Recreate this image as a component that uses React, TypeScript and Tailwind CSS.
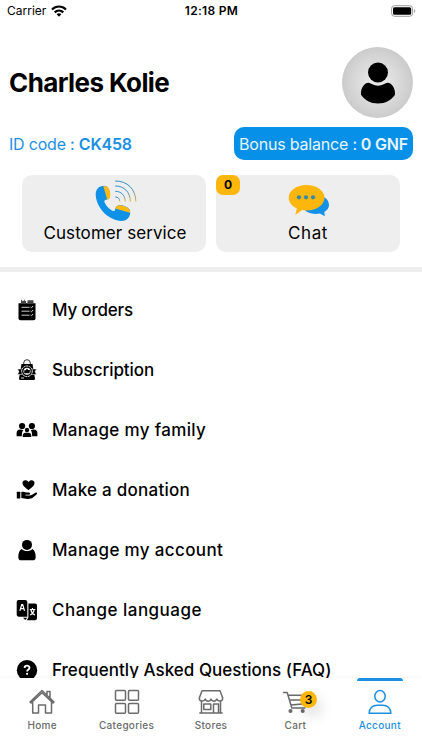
import React from "react";

const ink = "#000";

function OrdersIcon() {
  return (
    <svg width="20" height="22" viewBox="0 0 20 22">
      <path d="M1.500 4.200h17v15a2 2 0 0 1-2 2h-13a2 2 0 0 1-2-2z" fill={ink} />
      <path d="M4 1l1.3 1M8 .8 6.6 2" stroke={ink} strokeWidth=".8" />
      <path d="M4 2h5v2.400H4zM10.500 1.200h6v3h-6z" fill="#444" />
      <path d="M4.5 8.300h8M4.500 12.200h8M4.500 16.200h8M13.500 8l1 .8L16 7M13.500 12l1 .8L16 11M13.500 16l1 .8L16 15" stroke="#ccc" strokeWidth="1" fill="none" />
    </svg>
  );
}

function SubscriptionIcon() {
  return (
    <svg width="20" height="22" viewBox="0 0 20 22">
      <path d="M6.7 6.5V4a3.3 3.3 0 0 1 6.6 0v2.500" fill="none" stroke="#333" strokeWidth="1" />
      <path d="M4.500 5h11L18 19.500a1.500 1.500 0 0 1-1.500 1.500h-13A1.500 1.500 0 0 1 2 19.500z" fill={ink} />
      <path d="M.5 10h5v5.500h-5l1.500-2.700zM19.500 10h-5v5.500h5L18 12.800z" fill={ink} stroke="#fff" strokeWidth=".5" />
      <circle cx="10" cy="12.300" r="5.300" fill={ink} stroke="#fff" strokeWidth="1" strokeDasharray="2 .6" />
      <circle cx="10" cy="12.300" r="3.500" fill="#fff" />
      <path d="M7.200 14.200v-3h1.400L10 9.600l1.100 1.500h1.900l-.5 3.100z" fill={ink} />
      <path d="M4 19h3" stroke="#bbb" strokeWidth="1.200" />
    </svg>
  );
}

function FamilyIcon() {
  return (
    <svg width="22" height="16" viewBox="0 0 22 16">
      <g fill={ink}>
        <circle cx="6.100" cy="4" r="3.100" />
        <circle cx="15.900" cy="4" r="3.100" />
        <path d="M.6 14.300V11c0-2.300 1.500-3.500 3.500-3.500 1.200 0 2.500.2 3.200.8C6 9.500 6 12 5.800 14.300zM21.400 14.300V11c0-2.300-1.500-3.500-3.500-3.500-1.200 0-2.500.2-3.200.8 1.300 1.200 1.300 3.700 1.500 6z" />
        <circle cx="11" cy="8" r="2.200" />
        <path d="M6.700 15v-1.300c0-2 1.200-3 2.700-3h3.200c1.500 0 2.700 1 2.700 3V15z" />
      </g>
    </svg>
  );
}

function DonationIcon() {
  return (
    <svg width="22" height="21" viewBox="0 0 22 21">
      <g fill={ink}>
        <path d="M12.500 11.300C8.300 7.900 6.500 6.200 6.500 4 6.500 1 10.500.2 12.500 2.900 14.500.2 18.500 1 18.500 4c0 2.200-1.800 3.900-6 7.300z" />
        <rect x=".8" y="12.800" width="3.500" height="6.800" rx=".5" />
        <path d="M5.300 13c3-1 4.500.5 6.700.5 2.800 0 2.900 2.300.2 2.300H9.500v.7h3.700c2.200 0 4.500-1.900 6.300-2.700 1.700-.7 2.300.7 1 1.700-3.300 2.700-4.500 4.700-9 4.400l-6.200-.9z" />
      </g>
    </svg>
  );
}

function AccountIcon() {
  return (
    <svg width="20" height="22" viewBox="0 0 20 22">
      <circle cx="10" cy="5.900" r="5" fill={ink} />
      <path d="M4.600 10c2.700 2.800 8.100 2.800 10.800 0 2.400 1.500 3.300 4.200 3.300 8.200 0 1.900-1 3.100-2.800 3.100H4.100c-1.800 0-2.800-1.200-2.800-3.100 0-4 .9-6.700 3.300-8.200z" fill={ink} />
    </svg>
  );
}

function LanguageIcon() {
  return (
    <svg width="22" height="22" viewBox="0 0 22 22">
      <path d="M2.500 1h6.800a2 2 0 0 1 2 1.700V17.700H2.500A2 2 0 0 1 .7 15.800V3a2 2 0 0 1 1.800-2zM12.400 4.500H19a2 2 0 0 1 2 2v12.800a2 2 0 0 1-2 2h-8.300l1.700-2.800zM7 18.700h4.300L9.200 21z" fill={ink} />
      <path d="m3.900 11.800 1.800-6.300h1l1.800 6.300M4.800 9.700H8M13.800 10.500h5.500M16.500 9v1.500M14.200 16c2.200-1.200 3.700-3 3.800-5.300M14.900 11c.5 2.300 1.800 4 4.100 5" fill="none" stroke="#fff" strokeWidth="1.200" />
    </svg>
  );
}

function FaqIcon() {
  return (
    <svg width="22" height="22" viewBox="0 0 22 22">
      <circle cx="11" cy="11.200" r="10.200" fill={ink} />
      <path d="M8.600 8.900c0-3 4.900-2.900 4.900-.2 0 1.800-2.400 1.700-2.400 3.800" fill="none" stroke="#fff" strokeWidth="1.800" />
      <circle cx="11.100" cy="14.800" r="1.100" fill="#fff" />
    </svg>
  );
}

function PhoneIcon() {
  return (
    <svg width="42" height="42" viewBox="0 0 42 42">
      <defs>
        <linearGradient id="wave" x1="0" y1="0" x2="0" y2="1">
          <stop offset=".3" stopColor="#2b91c9" />
          <stop offset="1" stopColor="#e8b12c" />
        </linearGradient>
      </defs>
      <path d="M10.200 5.900C4 5.500 0 9.600.8 16 2 27.500 12 39.600 25.700 40.900c5.500.2 9.300-3 9.500-8.200.2-3.300-1.200-4.900-4.300-6-4.200-1.700-8.200-2-10 .5-.9 1.400-.5 3.100-1.700 3.800-3 .8-10.500-7.500-9.800-10.300.3-1.100 2.500-.9 4-1.800 2.200-1.500 2-4.500.9-8.200-.8-2.700-1.800-4.600-4.100-4.800z" fill="#0f91e8" />
      <path d="M8.300 5.900c3.700-.2 5.400 1.400 6.200 4.200 1.200 4.400 1.400 8.600-2.200 10z" fill="#fdb913" />
      <path d="M20.200 28.500c1-4.300 5.500-3.700 10.500-1.800 3.300 1.200 4.700 3.100 4.300 6z" fill="#fdb913" />
      <g fill="none" stroke="url(#wave)" strokeWidth="1">
        <path d="M20.200 1C32.500 1 40.500 9 40.900 21.500" />
        <path d="M20.200 6c9 0 14.900 6 15.200 15.500" />
        <path d="M20.200 11.300c6 0 9.900 4 10 10.200" />
        <path d="M20.200 17c3 0 4.500 1.600 4.600 4.500" />
      </g>
    </svg>
  );
}

function ChatIcon() {
  return (
    <svg width="42" height="34" viewBox="0 0 42 34">
      <path d="M27 11c8-.5 14 4 14 10 0 3-1.700 5.300-4.700 7l.6 4.300-5-2.700c-7 1.200-14-.5-16-5z" fill="#1191e8" />
      <path d="M18.500 1C28.500 1 36.500 6.500 36.500 13.700S28.500 26.500 18.500 26.500c-1.700 0-3-.1-4.400-.4L7.300 31l1.500-6.700C4 22.200.7 18.400.7 13.700.7 6.500 8.600 1 18.500 1z" fill="#fdb60b" />
      <g fill="#358aa6"><circle cx="11" cy="13.300" r="2.100" /><circle cx="18" cy="13.300" r="2.100" /><circle cx="25" cy="13.300" r="2.100" /></g>
    </svg>
  );
}

const line = { fill: "none", stroke: "currentColor", strokeWidth: 1.5, strokeLinejoin: "round" as const, strokeLinecap: "round" as const };

const navIcons = {
  home: (
    <svg width="28" height="28" viewBox="0 0 28 28" {...line}>
      <path d="M2 14 14 2.500 26 14l-1 1L14 4.700 3 15zM4.700 14.500V25H10.500v-8h7v8h6V14.500M19 6.500V3.500h3v6" />
    </svg>
  ),
  categories: (
    <svg width="28" height="28" viewBox="0 0 28 28" {...line}>
      <rect x="2.500" y="2.500" width="10" height="9.800" rx="1" /><rect x="15.500" y="2.500" width="10" height="9.800" rx="1" />
      <rect x="2.500" y="15.500" width="10" height="9.800" rx="1" /><rect x="15.500" y="15.500" width="10" height="9.800" rx="1" />
    </svg>
  ),
  stores: (
    <svg width="28" height="28" viewBox="0 0 28 28" {...line}>
      <path d="M5 2.700h18l2.700 7.200c0 4-4.400 4-5.900 1.200-1.300 2.800-4.900 2.800-5.800 0-.9 2.800-4.500 2.800-5.800 0C6.700 13.900 2.300 13.900 2.300 9.900zM4.500 13v12M23.500 13v12M16.500 25v-9h5v9M6.800 16h7v5.500h-7zM2.800 25h22.400" />
    </svg>
  ),
  cart: (
    <svg width="28" height="28" viewBox="0 0 28 28" {...line}>
      <path d="M2.500 4.500h3.700L10.800 20H24M7.200 7.200H26l-2 8.600-14 1.200M8.700 12H25" />
      <circle cx="9.500" cy="23" r="1.300" fill="currentColor" /><circle cx="21.700" cy="23" r="1.300" fill="currentColor" />
    </svg>
  ),
  account: (
    <svg width="28" height="28" viewBox="0 0 28 28" {...line}>
      <ellipse cx="14" cy="8.200" rx="5.200" ry="5.700" />
      <path d="M3.200 25.200c0-5.200 3.700-7.900 8-7.900h5.600c4.300 0 8 2.700 8 7.900z" />
    </svg>
  ),
};

const menu = [
  { label: "My orders", icon: <OrdersIcon />, tracking: "tracking-[-0.2px]" },
  { label: "Subscription", icon: <SubscriptionIcon />, tracking: "tracking-[-0.05px]" },
  { label: "Manage my family", icon: <FamilyIcon />, tracking: "tracking-[0.35px]" },
  { label: "Make a donation", icon: <DonationIcon />, tracking: "tracking-[0.25px]" },
  { label: "Manage my account", icon: <AccountIcon />, tracking: "tracking-[0.36px]" },
  { label: "Change language", icon: <LanguageIcon />, tracking: "tracking-[0.48px]" },
  { label: "Frequently Asked Questions (FAQ)", icon: <FaqIcon />, tracking: "tracking-[0.02px]" },
];

const tabs = [
  { label: "Home", icon: navIcons.home },
  { label: "Categories", icon: navIcons.categories },
  { label: "Stores", icon: navIcons.stores },
  { label: "Cart", icon: navIcons.cart, badge: 3 },
  { label: "Account", icon: navIcons.account, active: true },
];

export default function App() {
  return (
    <div className="flex h-[750px] w-[422px] flex-col overflow-hidden bg-white font-['Inter',sans-serif] text-black">
      <div className="grid h-[22px] shrink-0 grid-cols-3 items-center pl-[7px] pr-[6px] text-[12px]">
        <div className="flex items-center gap-[5px]">
          <span>Carrier</span>
          <svg width="16" height="12" viewBox="0 0 16 12" fill="none" stroke="#000" strokeWidth="2.200">
            <path d="M1 4.500c4-4 10-4 14 0M3.700 7.400c2.500-2.400 6.100-2.400 8.600 0" />
            <path d="M5.600 9.300c1.500-1.300 3.300-1.300 4.800 0L8 11.700z" fill="#000" stroke="none" />
          </svg>
        </div>
        <span className="text-center font-semibold tracking-[0.3px] whitespace-nowrap">12:18 PM</span>
        <div className="flex justify-end">
          <svg width="25" height="12" viewBox="0 0 25 12">
            <rect x=".6" y=".7" width="21" height="10.600" rx="3" fill="#fff" stroke="#999" />
            <rect x="2" y="2.200" width="18.200" height="7.600" rx="1.500" />
            <path d="M23.300 4c1.300.7 1.300 3.300 0 4z" fill="#888" />
          </svg>
        </div>
      </div>

      <header className="flex h-[96px] shrink-0 items-end justify-between px-[9px]">
        <h1 className="flex h-[71px] items-center text-[26px] font-bold tracking-[-0.6px]">Charles Kolie</h1>
        <div className="flex size-[71px] items-center justify-center rounded-full bg-[radial-gradient(circle,#e5e5e5_20%,#bcbcbc_100%)]">
          <svg width="36" height="42" viewBox="0 0 36 42">
            <circle cx="18" cy="10.500" r="10" />
            <path d="M8.500 20.800c2 0 5 3 9.500 3s7.500-3 9.500-3c4.500 0 8 6 7.500 12C31 38.500 25.500 41.500 18 41.500S5 38.500 1 32.800c-.5-6 3-12 7.500-12z" />
          </svg>
        </div>
      </header>

      <div className="mt-[9px] flex h-[33px] shrink-0 items-center justify-between px-[9px] text-[16px] tracking-[-0.2px]">
        <p className="text-[#1c8fe3]">ID code : <b className="font-semibold">CK458</b></p>
        <p className="flex h-[33px] w-[179px] items-center justify-center gap-1 rounded-[10px] bg-[#0790e8] whitespace-nowrap text-[#e6f5ff]">
          <span>Bonus balance :</span><b className="font-semibold">0 GNF</b>
        </p>
      </div>

      <div className="mt-[15px] flex shrink-0 gap-[10px] px-[22px]">
        <div className="flex h-[77px] w-[184px] flex-col items-center rounded-[10px] bg-[#eee] pt-[5px]">
          <div className="ml-[3px] h-[42px]"><PhoneIcon /></div>
          <span className="ml-[2px] text-[17px] leading-[22px] tracking-[0.07px]">Customer service</span>
        </div>
        <div className="relative flex h-[77px] w-[184px] flex-col items-center rounded-[10px] bg-[#eee] pt-[9px]">
          <span className="absolute top-0 left-0 flex h-[20px] w-[24px] items-center justify-center rounded-[7px] bg-[#fdb60b] text-[12px] font-bold">0</span>
          <div className="ml-[2px] h-[38px]"><ChatIcon /></div>
          <span className="text-[17px] leading-[22px] tracking-[0.6px]">Chat</span>
        </div>
      </div>

      <div className="mt-[15px] h-[5px] shrink-0 bg-[#eee]" />

      <main className="min-h-0 flex-1 overflow-hidden pt-[7px]">
        {menu.map((item) => (
          <div key={item.label} className="flex h-[60px] items-center pl-[16px]">
            <div className="flex w-[22px] justify-center pt-px">{item.icon}</div>
            <span className={`ml-[14px] pt-[3px] text-[17px] font-medium whitespace-nowrap ${item.tracking}`}>{item.label}</span>
          </div>
        ))}
      </main>

      <nav className="grid h-[72px] shrink-0 grid-cols-5 bg-white shadow-[0_-1px_3px_rgba(0,0,0,0.03)]">
        {tabs.map((tab) => (
          <div key={tab.label} className={`relative flex flex-col items-center ${tab.active ? "text-[#1c8fe3]" : "text-[#6b6b6b]"}`}>
            <div className={`h-[3px] w-[46px] rounded-t-[3px] ${tab.active ? "bg-[#1c8fe3]" : "bg-transparent"}`} />
            <div className="mt-[7px] h-[28px]">{tab.icon}</div>
            <span className="mt-[2px] text-[10px] leading-[14px] font-medium tracking-[0.3px]">{tab.label}</span>
            {tab.badge && (
              <span className="absolute top-[13px] left-[47px] flex size-[17px] items-center justify-center rounded-full bg-[#fdb60b] text-[12px] font-semibold text-black shadow-[4px_8px_14px_rgba(0,0,0,0.15)]">{tab.badge}</span>
            )}
          </div>
        ))}
      </nav>
    </div>
  );
}
